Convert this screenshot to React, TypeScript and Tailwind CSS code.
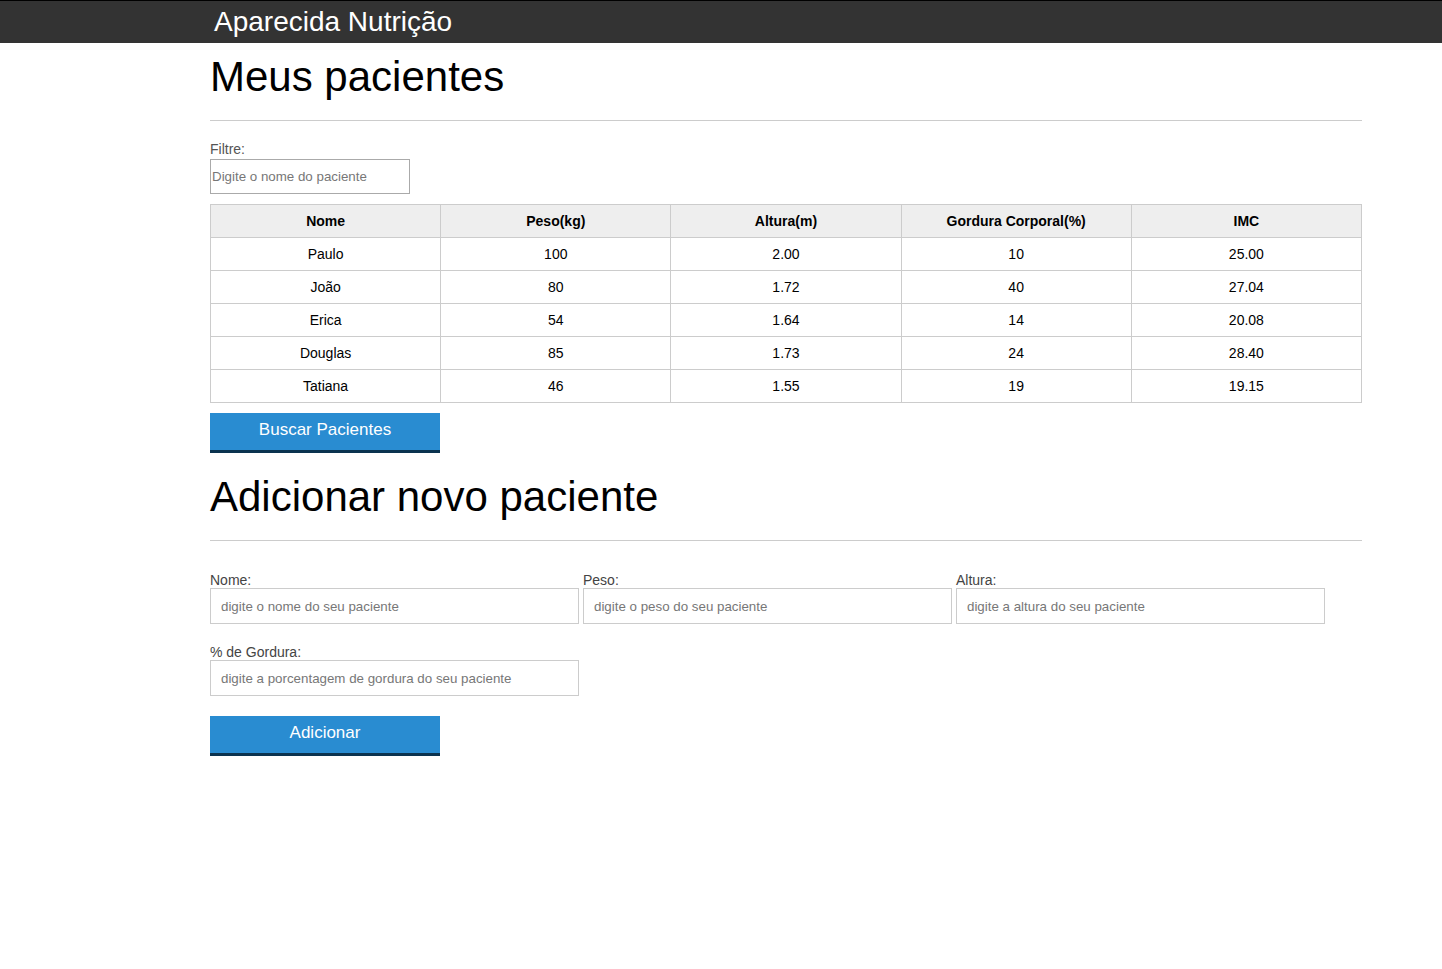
const pacientes = [
    { nome: "Paulo", peso: "100", altura: "2.00", gordura: "10", imc: "25.00" },
    { nome: "João", peso: "80", altura: "1.72", gordura: "40", imc: "27.04" },
    { nome: "Erica", peso: "54", altura: "1.64", gordura: "14", imc: "20.08" },
    { nome: "Douglas", peso: "85", altura: "1.73", gordura: "24", imc: "28.40" },
    { nome: "Tatiana", peso: "46", altura: "1.55", gordura: "19", imc: "19.15" },
];

const Field = ({ label, placeholder }: { label: string; placeholder: string }) => {
    return <div className="flex flex-col w-[369px]">
        <label className="text-[14px] text-[#444] leading-4">{label}</label>
        <input
            placeholder={placeholder}
            className="h-[36px] border border-[#ccc] px-[10px] text-[13.33px] placeholder:text-[#777] outline-none bg-white"
        />
    </div>
}

export default function App() {
    return <div className="min-h-screen bg-white font-['Liberation_Sans',Arial,sans-serif]">
        <div className="h-[43px] bg-[#333] border-t border-black">
            <div className="ml-[214px] text-[28px] leading-[42px] text-white">Aparecida Nutrição</div>
        </div>

        <div className="ml-[210px] w-[1152px]">
            <h1 className="text-[42px] leading-[48px] text-black mt-[10px]">Meus pacientes</h1>
            <hr className="border-t border-[#ccc] mt-[19px]" />

            <div className="mt-[20px] text-[14px] text-[#555] leading-4">Filtre:</div>
            <input
                placeholder="Digite o nome do paciente"
                className="mt-[2px] w-[200px] h-[35px] border border-[#aaa] px-[1px] text-[13.33px] placeholder:text-[#777] outline-none"
            />

            <table className="mt-[10px] w-full border-collapse text-[14px] text-black table-fixed">
                <thead>
                    <tr className="bg-[#eee] h-[33px]">
                        <th className="border border-[#ccc] font-bold">Nome</th>
                        <th className="border border-[#ccc] font-bold">Peso(kg)</th>
                        <th className="border border-[#ccc] font-bold">Altura(m)</th>
                        <th className="border border-[#ccc] font-bold">Gordura Corporal(%)</th>
                        <th className="border border-[#ccc] font-bold">IMC</th>
                    </tr>
                </thead>
                <tbody>
                    {pacientes.map((p) => (
                        <tr key={p.nome} className="h-[33px] text-center">
                            <td className="border border-[#ccc]">{p.nome}</td>
                            <td className="border border-[#ccc]">{p.peso}</td>
                            <td className="border border-[#ccc]">{p.altura}</td>
                            <td className="border border-[#ccc]">{p.gordura}</td>
                            <td className="border border-[#ccc]">{p.imc}</td>
                        </tr>
                    ))}
                </tbody>
            </table>

            <button className="mt-[10px] w-[230px] h-[40px] bg-[#298cd1] border-b-[3px] border-[#0b334f] text-white text-[17px] pb-[4px]">
                Buscar Pacientes
            </button>

            <h2 className="text-[42px] leading-[48px] text-black mt-[20px]">Adicionar novo paciente</h2>
            <hr className="border-t border-[#ccc] mt-[19px]" />

            <div className="mt-[31px] flex gap-[4px]">
                <Field label="Nome:" placeholder="digite o nome do seu paciente" />
                <Field label="Peso:" placeholder="digite o peso do seu paciente" />
                <Field label="Altura:" placeholder="digite a altura do seu paciente" />
            </div>
            <div className="mt-[20px] flex">
                <Field label="% de Gordura:" placeholder="digite a porcentagem de gordura do seu paciente" />
            </div>

            <button className="mt-[20px] w-[230px] h-[40px] bg-[#298cd1] border-b-[3px] border-[#0b334f] text-white text-[17px] pb-[4px]">
                Adicionar
            </button>
        </div>
    </div>
}
